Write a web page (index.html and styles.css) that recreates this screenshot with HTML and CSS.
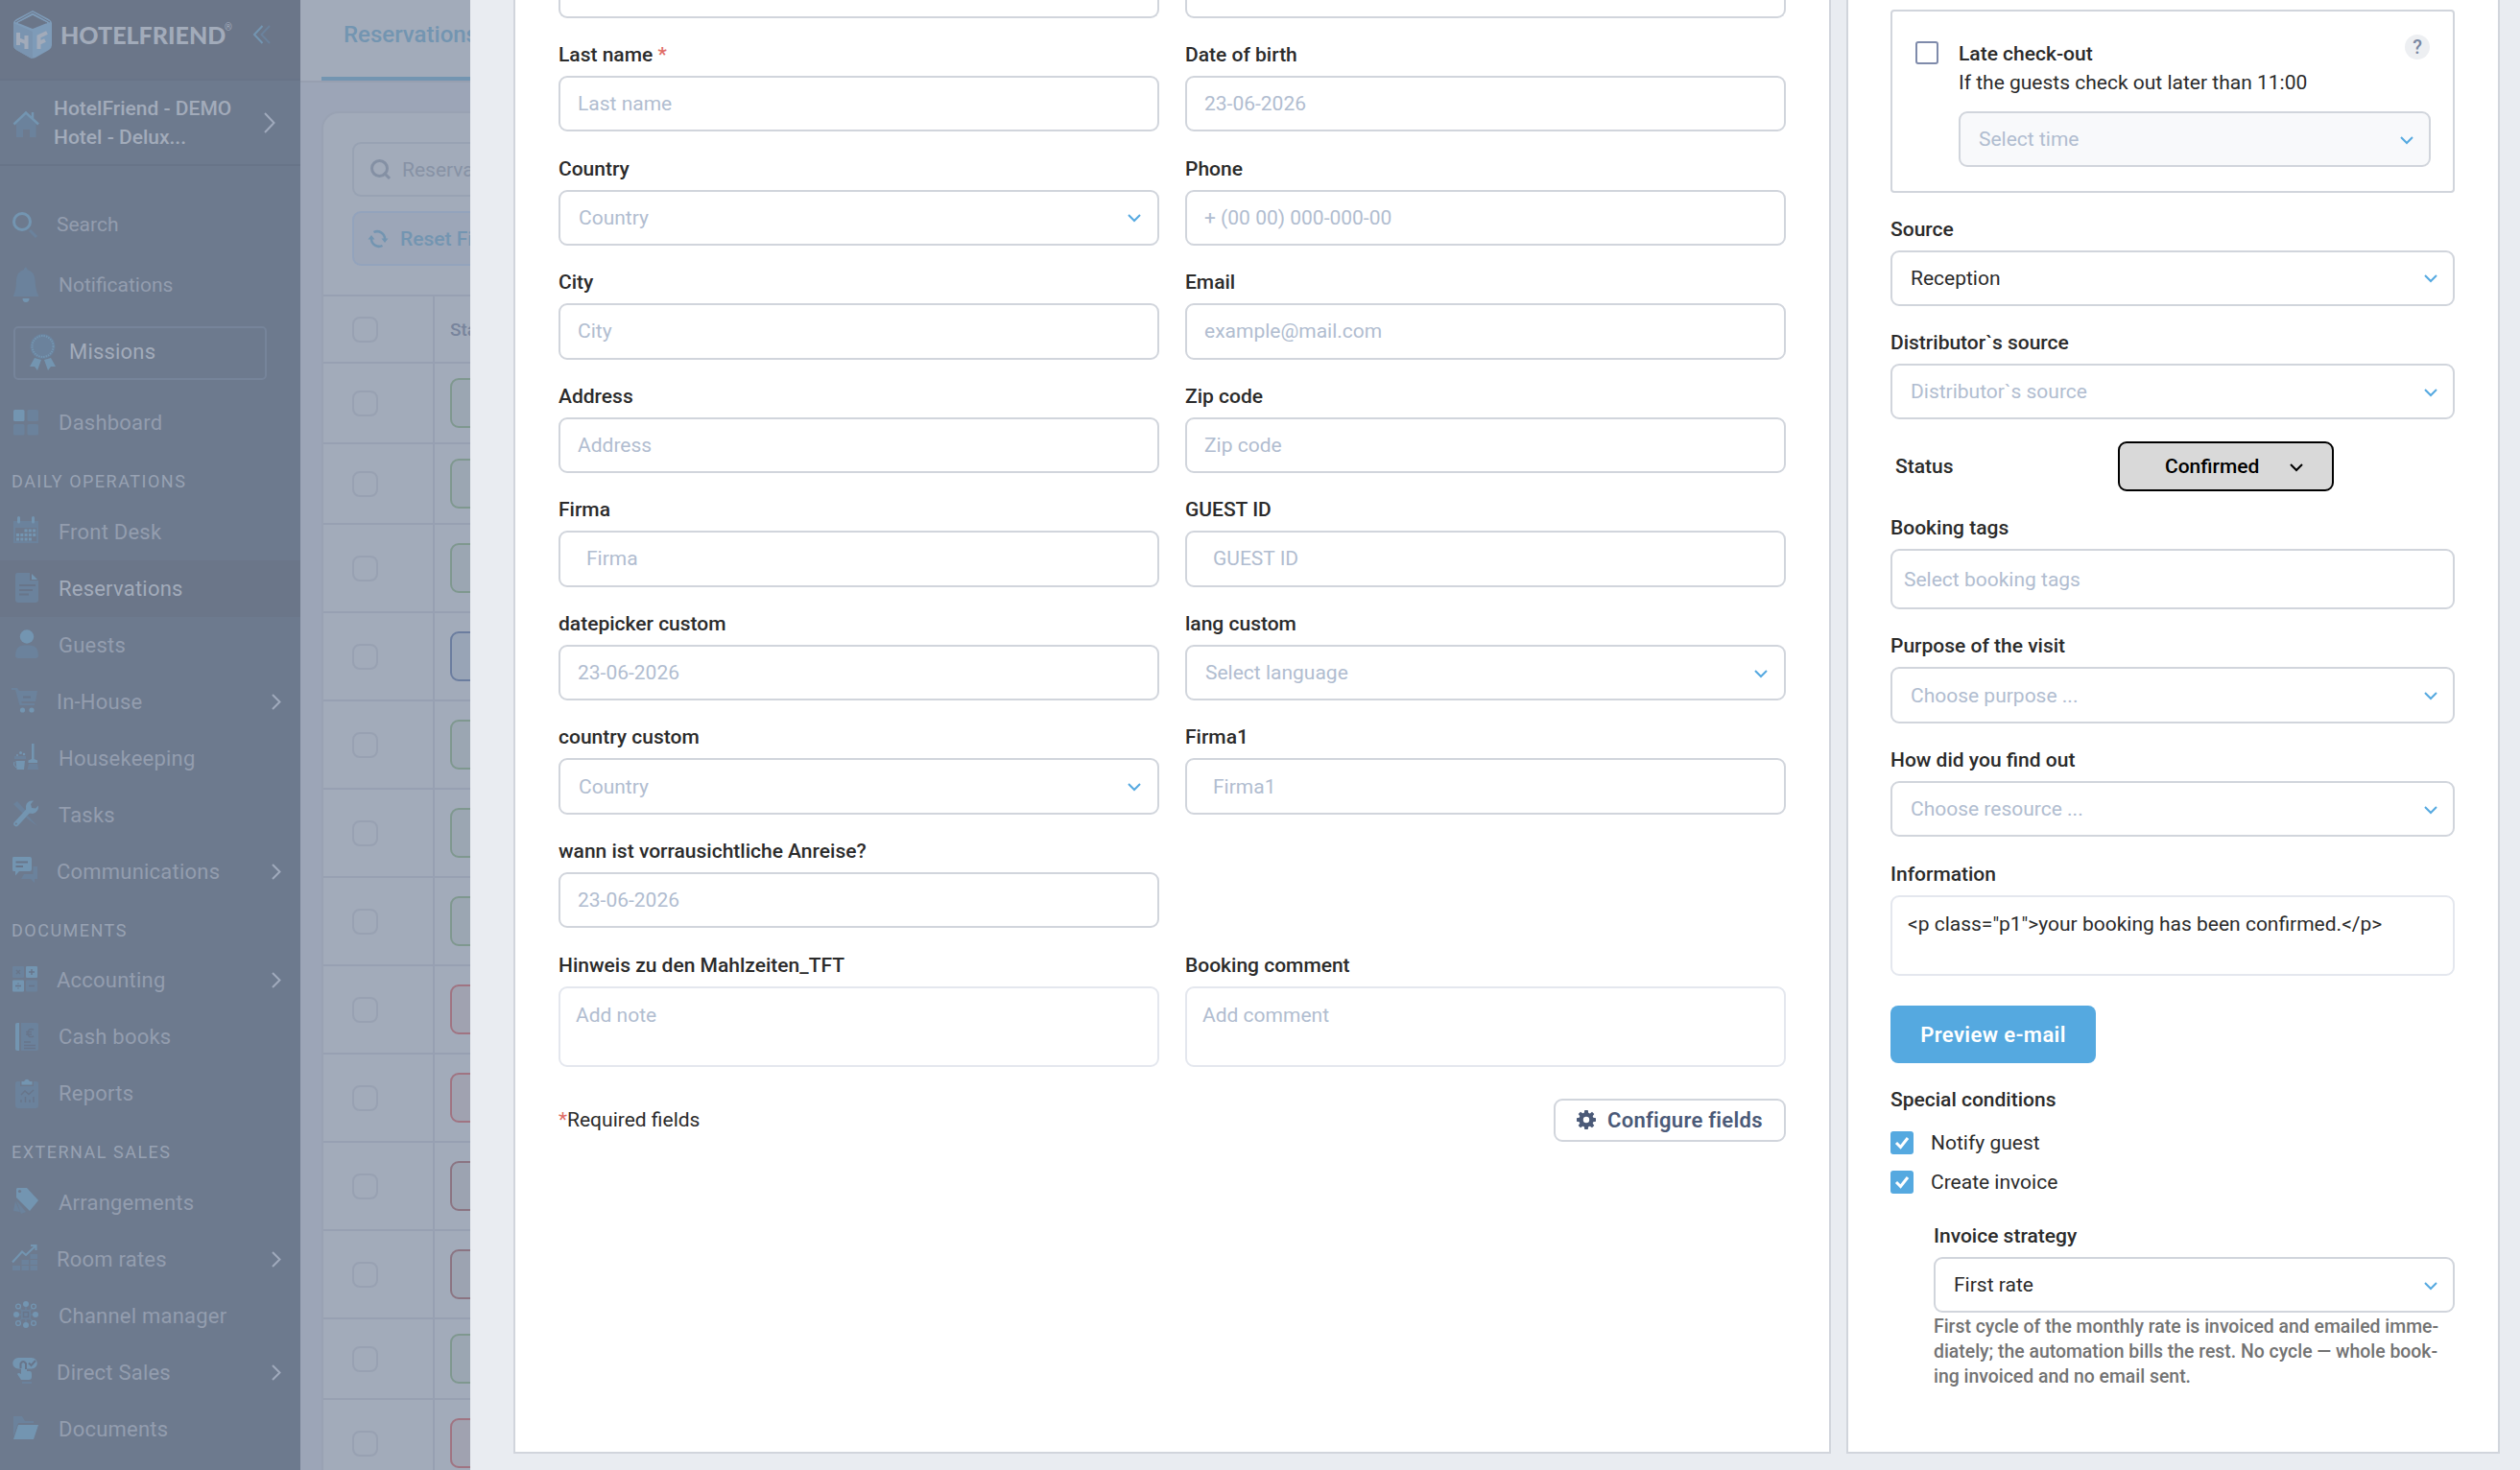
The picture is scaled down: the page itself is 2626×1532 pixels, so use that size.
FILE: index.html
```html
<!DOCTYPE html>
<html lang="en">
<head>
    <meta charset="utf-8">
    <title>HotelFriend - Reservations</title>
    <link rel="stylesheet" href="styles.css">
</head>
<body>
    <aside class="sidebar">
        <div class="brand">
            <svg class="brand-cube" width="40" height="50" viewBox="0 0 40 50">
                <path class="c1" d="M20 0 37 9Q40 11 40 13V36Q40 39 37 41L23 49Q20 50.500 17 49L3 41Q0 39 0 36V13Q0 11 3 9Z"/>
                <path class="c2" d="M0 13 20 22V50Q18.500 50 17 49L3 41Q0 39 0 36Z"/>
                <path class="c3" d="M5 13 20 5 35 13 20 19Z"/>
                <path class="c4" d="M2 12 20 2 38 12M5 13 20 5.500 35 13" />
                <path class="c5" d="M5 23V36M13.500 26V40M5 30 13.500 33.500M26.500 40V27L35 23M26.500 34 33 31"/>
            </svg>
            <span class="brand-name">HOTELFRIEND</span><sup class="brand-reg">®</sup>
            <svg class="collapse" width="20" height="20" viewBox="0 0 20 20">
                <path class="b" d="M10.500 1 2 10 10.500 19"/><path class="d" d="M18 1 9.500 10 18 19"/>
            </svg>
        </div>
        <div class="hotel">
            <svg class="icon" width="28" height="32" viewBox="0 0 28 32">
                <path class="dim" d="M4 17 14 7 24.500 17V31H18V23H11V31H4Z"/>
                <path class="line" d="M1.500 17.500 14 5.500 27 17.500M21 5V11.500"/>
            </svg>
            <div class="hotel-name">HotelFriend - DEMO<br>Hotel - Delux...</div>
            <svg class="arrow" width="12" height="22" viewBox="0 0 12 22"><path d="M1 1 10.500 11 1 21"/></svg>
        </div>
        <nav>
            <div class="item sub tall first">
                <svg class="icon" width="28" height="32" viewBox="0 0 28 32">
                    <circle class="line3" cx="11" cy="13" r="8.500"/><path class="dimline" d="M19 22 26 29"/>
                </svg>Search
            </div>
            <div class="item tall">
                <svg class="icon" width="28" height="40" viewBox="0 0 28 40">
                    <path class="dim" d="M12 4V3Q14 0 15.500 3V4Q23 6 23.500 15Q24 25 27 31V32H1V31Q4 25 4 15Q4.500 6 12 4Z"/>
                    <path class="lit" d="M10.500 34H17.500Q17.500 38 14 38Q10.500 38 10.500 34Z"/>
                </svg>Notifications
            </div>
            <div class="missions">
                <svg width="27" height="39" viewBox="0 0 27 39">
                    <path class="lit" d="M5 26 0 35H5L8 39 12 28ZM22 26 27 35H22L19 39 15 28Z"/>
                    <circle class="dim" cx="13.500" cy="14" r="13"/>
                    <circle class="ring" cx="13.500" cy="14" r="11"/>
                </svg>Missions
            </div>
            <div class="item">
                <svg class="icon" width="28" height="32" viewBox="0 0 28 32">
                    <rect class="lit" x="1" y="2" width="11.500" height="12" rx="1.500"/><rect class="dim" x="15.500" y="2" width="11.500" height="12" rx="1.500"/>
                    <rect class="dim" x="1" y="17" width="11.500" height="11.500" rx="1.500"/><rect class="dim" x="15.500" y="17" width="11.500" height="11.500" rx="1.500"/>
                </svg>Dashboard
            </div>
            <div class="title">DAILY OPERATIONS</div>
            <div class="item">
                <svg class="icon" width="28" height="32" viewBox="0 0 28 32">
                    <path class="dim" fill-rule="evenodd" d="M1 5H27V28H1ZM3 12V26H25V12Z"/>
                    <path class="tick" d="M6.500 1.500V6M21.500 1.500V6"/>
                    <path class="dots" d="M12.500 15H25M4 19.500H25M4 24H21"/>
                </svg>Front Desk
            </div>
            <div class="item active">
                <svg class="icon" width="28" height="32" viewBox="0 0 28 32">
                    <path class="dim" d="M5 0H18V8H27V28Q27 31 24 31H6Q3 31 3 28V3Q3 0 5 0Z"/>
                    <path class="lit" d="M20 1 26 7H20Z"/>
                    <path class="cut" d="M7 13H24M7 18H21M7 22.500H17"/>
                </svg>Reservations
            </div>
            <div class="item">
                <svg class="icon" width="28" height="32" viewBox="0 0 28 32">
                    <circle class="lit" cx="15" cy="7.500" r="7.200"/><path class="dim" d="M3 27Q3 16.500 12 16.500H18Q27 16.500 27 27Q27 30 24 30H6Q3 30 3 27Z"/>
                </svg>Guests
            </div>
            <div class="item sub">
                <svg class="icon" width="28" height="32" viewBox="0 0 28 32">
                    <path class="dim" d="M0 2H6L8 5H27L25 16H10L11 18H24V20H8.500L4 4H0Z"/><path class="cut" d="M12 11.500H20"/>
                    <circle class="lit" cx="11.500" cy="25" r="2.600"/><circle class="lit" cx="21" cy="25" r="2.600"/>
                </svg>In-House
                <svg class="arrow" width="10" height="17" viewBox="0 0 10 17"><path d="M1 1 8.500 8.500 1 16"/></svg>
            </div>
            <div class="item">
                <svg class="icon" width="28" height="32" viewBox="0 0 28 32">
                    <path class="lit" d="M20 1H22.500V17L26 18.500V21H16.500V18.500L20 17ZM3.500 19H13L12 28H4.500Z"/>
                    <path class="dim" d="M17 22H26L27 28H15.500ZM2 14H14V17H2Z"/>
                    <path class="handle" d="M4 26Q0 23 2 20"/><circle class="lit" cx="5" cy="13" r="1"/><circle class="lit" cx="8.500" cy="10.500" r="1.500"/><circle class="lit" cx="12" cy="12" r="1.300"/>
                </svg>Housekeeping
            </div>
            <div class="item">
                <svg class="icon" width="28" height="32" viewBox="0 0 28 32">
                    <path class="dim" d="M1 5 5 2 14 12 11 15ZM16 17 26 28 14 19Z"/>
                    <path class="wrench" d="M4 25.500 16 12.500"/>
                    <path class="lit" d="M14 7Q15 1 22 1.500L19 5 20 9 24 9.500 27 6.500Q27.500 13.500 21 15Q13 15 14 7Z"/><circle class="hole" cx="3.800" cy="25.500" r="1"/>
                </svg>Tasks
            </div>
            <div class="item sub">
                <svg class="icon" width="28" height="32" viewBox="0 0 28 32">
                    <path class="dim" d="M22.500 11H27V24H24V28L20 24H10L13 19H22.500Z"/>
                    <path class="lit" d="M2 1H19Q21 1 21 3V14Q21 16 19 16H8L4 20.500V16H2Q1 16 1 14V3Q1 1 2 1Z"/><path class="cut" d="M4.500 6.500H17M4.500 11H12"/>
                </svg>Communications
                <svg class="arrow" width="10" height="17" viewBox="0 0 10 17"><path d="M1 1 8.500 8.500 1 16"/></svg>
            </div>
            <div class="title">DOCUMENTS</div>
            <div class="item sub">
                <svg class="icon" width="28" height="32" viewBox="0 0 28 32">
                    <rect class="dim" x="1" y="1" width="12" height="12" rx="1"/><rect class="lit" x="15" y="1" width="12" height="12" rx="1"/>
                    <rect class="lit" x="1" y="15.500" width="12" height="12" rx="1"/><rect class="dim" x="15" y="15.500" width="12" height="12" rx="1"/>
                    <path class="cut thin" d="M5 5 9 9M9 5 5 9M18 7H24M21 4V10M4 21.500H10M7 18.500V19.500M7 23.500V24.500M18 21.500H24"/>
                </svg>Accounting
                <svg class="arrow" width="10" height="17" viewBox="0 0 10 17"><path d="M1 1 8.500 8.500 1 16"/></svg>
            </div>
            <div class="item">
                <svg class="icon" width="28" height="32" viewBox="0 0 28 32">
                    <path class="lit" d="M5 1H7V30H5Q3 30 3 28V3Q3 1 5 1Z"/><path class="dim" d="M9 1H25Q27 1 27 3V28Q27 30 25 30H9Z"/>
                    <path class="cut thin" d="M22 8Q16 6 16 12Q16 17 22 15M14 10.500H20M14 13H20M12 21H19M12 24.500H24M12 27.500H24"/>
                </svg>Cash books
            </div>
            <div class="item">
                <svg class="icon" width="28" height="32" viewBox="0 0 28 32">
                    <path class="dim" d="M5 3H8V8H22V3H25Q27 3 27 5V28Q27 31 24 31H6Q3 31 3 28V5Q3 3 5 3Z"/>
                    <path class="lit" d="M9.500 6.500V3H12Q15 -1.500 18 3H20.500V6.500Z"/>
                    <path class="cut thin" d="M9 17 13 13 17 16.500 22 12M9 25V22M13.500 25V19M18 25V22M22 25V19"/>
                </svg>Reports
            </div>
            <div class="title">EXTERNAL SALES</div>
            <div class="item">
                <svg class="icon" width="28" height="32" viewBox="0 0 28 32">
                    <path class="dim" d="M4 14 14 26 9 28ZM3 15 8 26 1 25Z"/>
                    <path class="lit" d="M5 1H15L27 14 18 25 4 11V2Z"/><circle class="hole" cx="7.500" cy="4.500" r="1.600"/>
                </svg>Arrangements
            </div>
            <div class="item sub">
                <svg class="icon" width="28" height="32" viewBox="0 0 28 32">
                    <path class="dim" d="M1 23H9V28H1ZM10.500 23H18V28H10.500ZM19.500 23H27V28H19.500ZM10.500 17H18V22H10.500ZM19.500 17H27V22H19.500ZM19.500 11H27V16H19.500Z"/>
                    <path class="lit2" d="M1 19.500 11 8.500 15 12 25 2.500M20 2H25.500V7"/>
                </svg>Room rates
                <svg class="arrow" width="10" height="17" viewBox="0 0 10 17"><path d="M1 1 8.500 8.500 1 16"/></svg>
            </div>
            <div class="item">
                <svg class="icon" width="28" height="32" viewBox="0 0 28 32">
                    <path class="dim" d="M9 10H19V20H9Z"/>
                    <path class="spoke" d="M14 4V26M3 15H25M6 7 22 23M22 7 6 23"/>
                    <circle class="lit" cx="14" cy="4" r="3"/><circle class="lit" cx="14" cy="26" r="3"/><circle class="lit" cx="4" cy="15" r="3"/><circle class="lit" cx="24" cy="15" r="3"/>
                    <circle class="node" cx="6" cy="6.500" r="2.400"/><circle class="node" cx="22" cy="6.500" r="2.400"/><circle class="node" cx="6" cy="24" r="2.400"/><circle class="node" cx="22" cy="24" r="2.400"/>
                    <path class="cut thin" d="M11.500 12.500H16.500V17.500H11.500Z"/>
                </svg>Channel manager
            </div>
            <div class="item sub">
                <svg class="icon" width="28" height="32" viewBox="0 0 28 32">
                    <path class="lit" d="M7 1H21A5.500 5.500 0 0 1 21 12.500H16V15H19Q21 15 21 18V21Q21 24 18 24H10L6 18Q7 16 10 18V12.500H7A5.500 5.500 0 0 1 7 1Z"/>
                    <path class="cut" d="M9.500 12V7Q12 3 15 7V13M18 6.500 20.500 9 25 4"/><path class="dim" d="M11 26H21V28H11Z"/>
                </svg>Direct Sales
                <svg class="arrow" width="10" height="17" viewBox="0 0 10 17"><path d="M1 1 8.500 8.500 1 16"/></svg>
            </div>
            <div class="item">
                <svg class="icon" width="28" height="32" viewBox="0 0 28 32">
                    <path class="dim" d="M1 3H10L13 8H22V10H6L1 24Z"/><path class="lit" d="M6 12H27L22 27H1Z"/>
                </svg>Documents
            </div>
        </nav>
    </aside>

    <main class="page">
        <div class="tabs"><div class="tab">Reservations</div></div>
        <div class="list">
            <div class="filters">
                <div class="search">
                    <svg width="22" height="22" viewBox="0 0 22 22"><circle cx="9.500" cy="9.500" r="8"/><path d="M14 14 20 20"/></svg>Reservations
                </div>
                <div class="reset">
                    <svg width="20" height="20" viewBox="0 0 20 20"><path d="M5.500 3A8 8 0 0 1 17 10M14.500 17A8 8 0 0 1 3 10"/><path class="tip" d="M13.500 9.500H20.500L17 14ZM-.500 10.500H6.500L3 6Z"/></svg>Reset Filters
                </div>
            </div>
            <div class="row head"><div class="pick"><i></i></div><div class="state">Status</div></div>
            <div class="row low"><div class="pick"><i></i></div><div class="state"><b class="green"></b></div></div>
            <div class="row low"><div class="pick"><i></i></div><div class="state"><b class="green"></b></div></div>
            <div class="row"><div class="pick"><i></i></div><div class="state"><b class="green"></b></div></div>
            <div class="row"><div class="pick"><i></i></div><div class="state"><b class="blue"></b></div></div>
            <div class="row"><div class="pick"><i></i></div><div class="state"><b class="green"></b></div></div>
            <div class="row"><div class="pick"><i></i></div><div class="state"><b class="green"></b></div></div>
            <div class="row"><div class="pick"><i></i></div><div class="state"><b class="green"></b></div></div>
            <div class="row"><div class="pick"><i></i></div><div class="state"><b class="red"></b></div></div>
            <div class="row"><div class="pick"><i></i></div><div class="state"><b class="red"></b></div></div>
            <div class="row"><div class="pick"><i></i></div><div class="state"><b class="wine"></b></div></div>
            <div class="row"><div class="pick"><i></i></div><div class="state"><b class="wine"></b></div></div>
            <div class="row low"><div class="pick"><i></i></div><div class="state"><b class="green"></b></div></div>
            <div class="row"><div class="pick"><i></i></div><div class="state"><b class="red"></b></div></div>
        </div>
    </main>

    <section class="drawer">
        <div class="card guest">
            <div class="fields">
                <div class="control tail"></div>
                <div class="control tail"></div>
                <div class="field"><label>Last name <em>*</em></label><div class="control ph">Last name</div></div>
                <div class="field"><label>Date of birth</label><div class="control ph">23-06-2026</div></div>
                <div class="field"><label>Country</label><div class="control select ph">Country<svg class="chev" width="14" height="8" viewBox="0 0 14 8"><path d="M1 1 7 7 13 1"/></svg></div></div>
                <div class="field"><label>Phone</label><div class="control ph">+ (00 00) 000-000-00</div></div>
                <div class="field"><label>City</label><div class="control ph">City</div></div>
                <div class="field"><label>Email</label><div class="control ph">example@mail.com</div></div>
                <div class="field"><label>Address</label><div class="control ph">Address</div></div>
                <div class="field"><label>Zip code</label><div class="control ph">Zip code</div></div>
                <div class="field"><label>Firma</label><div class="control wide ph">Firma</div></div>
                <div class="field"><label>GUEST ID</label><div class="control wide ph">GUEST ID</div></div>
                <div class="field"><label>datepicker custom</label><div class="control ph">23-06-2026</div></div>
                <div class="field"><label>lang custom</label><div class="control select ph">Select language<svg class="chev" width="14" height="8" viewBox="0 0 14 8"><path d="M1 1 7 7 13 1"/></svg></div></div>
                <div class="field"><label>country custom</label><div class="control select ph">Country<svg class="chev" width="14" height="8" viewBox="0 0 14 8"><path d="M1 1 7 7 13 1"/></svg></div></div>
                <div class="field"><label>Firma1</label><div class="control wide ph">Firma1</div></div>
                <div class="field"><label>wann ist vorrausichtliche Anreise?</label><div class="control ph">23-06-2026</div></div>
                <div></div>
                <div class="field"><label>Hinweis zu den Mahlzeiten_TFT</label><div class="control area ph">Add note</div></div>
                <div class="field"><label>Booking comment</label><div class="control area ph">Add comment</div></div>
            </div>
            <div class="foot">
                <div><em>*</em>Required fields</div>
                <button class="configure">
                    <svg width="20" height="20" viewBox="0 0 20 20"><path fill-rule="evenodd" d="M8.300 0H11.700L12.200 2.700 13.800 3.400 16 1.800 18.300 4.100 16.700 6.300 17.300 7.800 20 8.300V11.700L17.300 12.200 16.700 13.800 18.300 16 16 18.300 13.800 16.700 12.200 17.300 11.700 20H8.300L7.800 17.300 6.200 16.700 4 18.300 1.700 16 3.300 13.800 2.700 12.200 0 11.700V8.300L2.700 7.800 3.300 6.200 1.700 4 4 1.700 6.200 3.300 7.800 2.700ZM10 6.800A3.200 3.200 0 1 0 10 13.200A3.200 3.200 0 1 0 10 6.800Z"/></svg>
                    Configure fields
                </button>
            </div>
        </div>

        <div class="card booking">
            <div class="late">
                <span class="box"></span>
                <div class="late-body">
                    <div class="late-head"><strong>Late check-out</strong><span class="help">?</span></div>
                    <div class="late-text">If the guests check out later than 11:00</div>
                    <div class="control select off ph">Select time<svg class="chev" width="14" height="8" viewBox="0 0 14 8"><path d="M1 1 7 7 13 1"/></svg></div>
                </div>
            </div>
            <div class="field source"><label>Source</label><div class="control select">Reception<svg class="chev" width="14" height="8" viewBox="0 0 14 8"><path d="M1 1 7 7 13 1"/></svg></div></div>
            <div class="field"><label>Distributor`s source</label><div class="control select ph">Distributor`s source<svg class="chev" width="14" height="8" viewBox="0 0 14 8"><path d="M1 1 7 7 13 1"/></svg></div></div>
            <div class="status">
                <strong>Status</strong>
                <div class="status-btn">Confirmed<svg class="chev" width="14" height="8" viewBox="0 0 14 8"><path d="M1 1 7 7 13 1"/></svg></div>
            </div>
            <div class="field tags"><label>Booking tags</label><div class="control ph">Select booking tags</div></div>
            <div class="field"><label>Purpose of the visit</label><div class="control select ph">Choose purpose ...<svg class="chev" width="14" height="8" viewBox="0 0 14 8"><path d="M1 1 7 7 13 1"/></svg></div></div>
            <div class="field"><label>How did you find out</label><div class="control select ph">Choose resource ...<svg class="chev" width="14" height="8" viewBox="0 0 14 8"><path d="M1 1 7 7 13 1"/></svg></div></div>
            <div class="field"><label>Information</label><div class="control area">&lt;p class="p1"&gt;your booking has been confirmed.&lt;/p&gt;</div></div>
            <button class="preview">Preview e-mail</button>
            <div class="special">Special conditions</div>
            <div class="check"><span class="tickbox"><svg width="16" height="14" viewBox="0 0 16 14"><path d="M2 7 6.500 11.500 14 2"/></svg></span>Notify guest</div>
            <div class="check"><span class="tickbox"><svg width="16" height="14" viewBox="0 0 16 14"><path d="M2 7 6.500 11.500 14 2"/></svg></span>Create invoice</div>
            <div class="strategy">
                <div class="field"><label>Invoice strategy</label><div class="control select">First rate<svg class="chev" width="14" height="8" viewBox="0 0 14 8"><path d="M1 1 7 7 13 1"/></svg></div></div>
                <p>First cycle of the monthly rate is invoiced and emailed imme-<br>diately; the automation bills the rest. No cycle — whole book-<br>ing invoiced and no email sent.</p>
            </div>
        </div>
    </section>
</body>
</html>
```
FILE: styles.css
```css
* {
    box-sizing: border-box;
}
html,
body {
    margin: 0;
    height: 1532px;
    overflow: hidden;
}
body {
    display: flex;
    font-family: Roboto, "Liberation Sans", sans-serif;
    font-size: 21px;
    color: #2b2b2b;
    background: #e9ecf1;
}
svg {
    flex: none;
    fill: none;
    overflow: visible;
}
em {
    font-style: normal;
    color: #e06c66;
}
strong {
    font-weight: 500;
}
button {
    font-family: inherit;
}

/* sidebar */
.sidebar {
    width: 313px;
    height: 1532px;
    flex: none;
    background: #6d7a8e;
    color: #939dae;
    overflow: hidden;
}
.brand {
    display: flex;
    align-items: center;
    height: 84px;
    padding: 0 0 10px 14px;
    background: #6b7689;
    border-bottom: 2px solid #687488;
}
.brand-cube .c1 { fill: #7e9bb8; }
.brand-cube .c2 { fill: #7a94b0; }
.brand-cube .c3 { fill: #6b7689; }
.brand-cube .c4 { stroke: #6b7689; stroke-width: 1; }
.brand-cube .c5 { stroke: #a2abba; stroke-width: 4; }
.brand-name {
    width: 169px;
    margin-left: 9px;
    font-family: Lato, sans-serif;
    font-weight: 900;
    font-size: 25px;
    color: #a2abba;
}
.brand-reg {
    width: 9px;
    margin: -14px 0 0 2px;
    font-size: 10px;
    line-height: 10px;
    color: #a2abba;
}
.collapse {
    margin-left: 20px;
    stroke-width: 2;
}
.collapse .b { stroke: #7395b1; }
.collapse .d { stroke: #6b829c; }
.hotel {
    display: flex;
    align-items: center;
    height: 89px;
    padding-left: 13px;
    border-bottom: 2px solid #687488;
}
.hotel-name {
    width: 219px;
    margin-left: 15px;
    font-weight: 500;
    line-height: 30px;
    color: #a2abba;
}
.arrow {
    stroke: #a0aabc;
    stroke-width: 2;
}
.item {
    display: flex;
    align-items: center;
    height: 59px;
    padding-left: 13px;
    font-size: 22px;
    letter-spacing: 0.22px;
}
.item .icon {
    margin-right: 20px;
}
.item.sub {
    padding-left: 12px;
}
.item.sub .icon {
    margin-right: 19px;
}
.item.tall {
    height: 63px;
    font-size: 21px;
    letter-spacing: 0;
}
.item.first {
    margin-top: 29px;
}
.item .arrow {
    margin: 0 20px 0 auto;
}
.item.active {
    background: #6b7689;
    color: #a2abba;
}
.missions {
    display: flex;
    align-items: center;
    width: 264px;
    height: 56px;
    margin: 12px 0 15px 14px;
    padding: 0 0 3px 15px;
    border: 2px solid #76849a;
    border-radius: 5px;
    font-size: 22px;
    letter-spacing: 0.2px;
    color: #a2abba;
}
.missions svg {
    margin-right: 14px;
}
.title {
    height: 54.5px;
    padding: 9px 0 0 12px;
    font-size: 18px;
    line-height: 45.5px;
    letter-spacing: 1.5px;
    color: #98a2b3;
}
.lit { fill: #7395b1; }
.dim { fill: #6b829c; }
.line { stroke: #7395b1; stroke-width: 2.5; }
.line3 { stroke: #7395b1; stroke-width: 3; }
.lit2 { stroke: #7395b1; stroke-width: 2; }
.dimline { stroke: #6b829c; stroke-width: 3; }
.ring { stroke: #7395b1; stroke-width: 2; stroke-dasharray: 1.5 1; }
.tick { stroke: #7395b1; stroke-width: 3; stroke-linecap: round; }
.dots { stroke: #7395b1; stroke-width: 3; stroke-dasharray: 3 1.3; }
.cut { stroke: #68758a; stroke-width: 2; }
.cut.thin { stroke-width: 1.4; }
.hole { fill: #6d7a8e; }
.handle { stroke: #7395b1; stroke-width: 1; }
.wrench { stroke: #7395b1; stroke-width: 5.5; stroke-linecap: round; }
.spoke { stroke: #6b829c; stroke-width: 1.5; }
.node { fill: #6d7a8e; stroke: #7395b1; stroke-width: 1.3; }

/* dimmed page under the drawer */
.page {
    width: 177px;
    flex: none;
    overflow: hidden;
    background: #9ca5b7;
    white-space: nowrap;
}
.tabs {
    height: 86px;
    padding-left: 22px;
    background: #a2abba;
    border-bottom: 2px solid #979fb0;
}
.tab {
    width: 220px;
    height: 84px;
    padding-left: 23px;
    border-bottom: 4px solid #7395b1;
    font-size: 24px;
    font-weight: 500;
    line-height: 72px;
    color: #7395b1;
}
.list {
    width: 600px;
    height: 1600px;
    margin: 30px 0 0 22px;
    background: #a2abba;
    border: 2px solid #99a2b3;
    border-radius: 18px;
}
.filters {
    height: 189px;
    padding: 30px 0 0 30px;
}
.search,
.reset {
    display: flex;
    align-items: center;
    width: 400px;
    height: 57px;
    padding-left: 17px;
    border: 2px solid #98a2b3;
    border-radius: 9px;
    color: #8792a5;
}
.search svg,
.reset svg {
    margin-right: 11px;
    stroke: #8490a4;
    stroke-width: 3;
}
.reset {
    margin-top: 15px;
    padding-left: 15px;
    border-color: #93a3bc;
    background: #9ca6b8;
    font-weight: 500;
    color: #7395b1;
}
.reset svg {
    margin-right: 13px;
    stroke: #7395b1;
    stroke-width: 2.5;
}
.reset .tip {
    fill: #7395b1;
    stroke: none;
}
.row {
    display: flex;
    height: 92px;
    border-top: 2px solid #97a0b2;
}
.row.head {
    height: 70px;
}
.row.low {
    height: 84px;
}
.pick {
    display: flex;
    align-items: center;
    width: 116px;
    padding-left: 30px;
    border-right: 2px solid #97a0b2;
}
.pick i {
    width: 27px;
    height: 27px;
    border: 2px solid #98a1b2;
    border-radius: 8px;
}
.state {
    display: flex;
    align-items: center;
    padding-left: 16px;
    font-size: 19px;
    font-weight: 500;
    color: #78849c;
}
.state b {
    width: 160px;
    height: 52px;
    border-width: 2px;
    border-style: solid;
    border-radius: 9px;
}
.green { border-color: #7f988f; background: #9ba6b2; }
.blue { border-color: #6b7d9f; background: #98a4b6; }
.red { border-color: #a07482; background: #a0a2b0; }
.wine { border-color: #8b7482; background: #9ca3b1; }

/* drawer with the booking form */
.drawer {
    display: flex;
    gap: 16px;
    flex: 1;
    height: 1515px;
    padding-left: 45px;
}
.card {
    background: #fff;
    border: 2px solid #d1d5dc;
    border-top: 0;
}
.guest {
    width: 1373px;
    padding: 0 45px;
}
.fields {
    display: grid;
    grid-template-columns: 626px 626px;
    column-gap: 27px;
}
label {
    display: block;
    height: 24px;
    margin-bottom: 10px;
    font-weight: 500;
    line-height: 24px;
}
.field {
    padding-top: 26.2px;
}
.control {
    display: flex;
    align-items: center;
    height: 58.4px;
    padding: 0 18px;
    background: #fff;
    border: 2px solid #d1d5dc;
    border-radius: 9px;
}
.control.tail {
    height: 18.8px;
    border-top: 0;
    border-radius: 0 0 9px 9px;
}
.control.select {
    padding-left: 19px;
}
.control.wide {
    padding-left: 27px;
}
.control.area {
    align-items: flex-start;
    height: 84.5px;
    padding: 16px 16px;
    line-height: 25px;
    border-color: #e4e7ee;
}
.control.off {
    background: #f8f9fb;
}
.ph {
    color: #b1bdd0;
}
.chev {
    margin: 1px -1px 0 auto;
    stroke: #55a9e0;
    stroke-width: 2;
}
.foot {
    display: flex;
    justify-content: space-between;
    align-items: center;
    height: 45px;
    margin-top: 32.5px;
}
.configure {
    display: flex;
    align-items: center;
    gap: 12px;
    width: 242px;
    height: 45px;
    padding: 0 0 0 22px;
    background: #fff;
    border: 2px solid #d1d5dc;
    border-radius: 9px;
    font-size: 22px;
    font-weight: 600;
    letter-spacing: 0.28px;
    color: #4b5a78;
}
.configure svg {
    fill: #4b5a78;
}

.booking {
    width: 681px;
    padding: 10px 45px 0 44px;
}
.booking .chev {
    margin-right: -2px;
}
.late {
    display: flex;
    height: 191px;
    padding: 31px 23px 0 24px;
    border: 2px solid #d1d5dc;
    border-radius: 4px;
}
.box {
    width: 24px;
    height: 24px;
    margin-right: 21px;
    border: 2px solid #7f8bab;
    border-radius: 3px;
}
.late-body {
    flex: 1;
}
.late-head {
    display: flex;
    justify-content: space-between;
    line-height: 26px;
}
.help {
    width: 26px;
    height: 26px;
    margin: -7px 1px 0 0;
    border-radius: 50%;
    background: #edeff2;
    font-size: 20px;
    font-weight: 500;
    text-align: center;
    color: #7c89a3;
}
.late-text {
    height: 30px;
    margin: 2px 0 15px;
    line-height: 30px;
}
.source {
    padding-top: 25.5px;
}
.status {
    display: flex;
    align-items: center;
    height: 52px;
    margin-top: 22.5px;
    padding-left: 5px;
}
.status strong {
    width: 232px;
}
.status-btn {
    display: flex;
    align-items: center;
    width: 225px;
    height: 52px;
    padding-left: 47px;
    border: 2px solid #000;
    border-radius: 9px;
    background: #d9d9d9;
    font-weight: 500;
    color: #000;
}
.status-btn .chev {
    margin: 2px 0 0 32px;
    stroke: #000;
}
.tags .control {
    height: 63px;
    padding-left: 12px;
}
.preview {
    display: block;
    width: 214px;
    height: 60px;
    margin: 31px 0 25px;
    padding: 0;
    border: 0;
    border-radius: 8px;
    background: #55a9e0;
    font-size: 22px;
    font-weight: 600;
    letter-spacing: 0.4px;
    color: #fff;
}
.special {
    height: 26px;
    margin-bottom: 19px;
    font-weight: 500;
    line-height: 26px;
}
.check {
    display: flex;
    align-items: center;
    height: 26px;
    margin-bottom: 15px;
}
.tickbox {
    display: flex;
    align-items: center;
    justify-content: center;
    width: 24px;
    height: 24px;
    margin-right: 18px;
    border-radius: 3px;
    background: #55a9e0;
}
.tickbox svg {
    stroke: #fff;
    stroke-width: 3;
}
.strategy {
    padding-left: 45px;
}
.strategy .field {
    padding-top: 16px;
}
.strategy p {
    margin: 2px 0 0;
    font-size: 19.4px;
    font-weight: 500;
    line-height: 26px;
    color: #737373;
    white-space: nowrap;
}
```
